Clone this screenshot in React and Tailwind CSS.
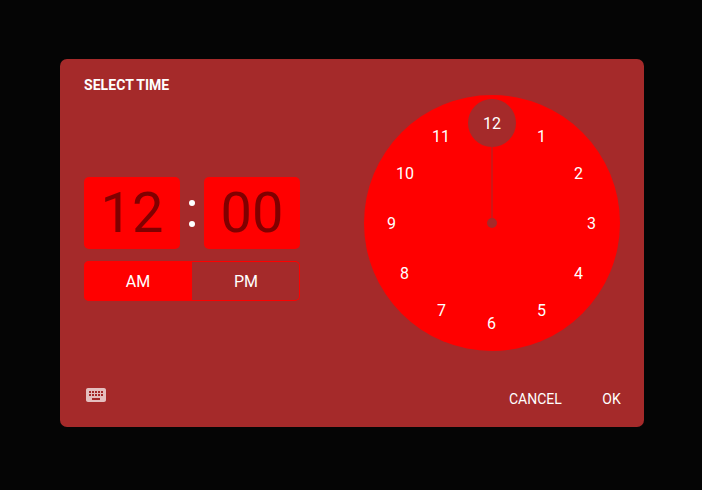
// Left edge and baseline of each hour label on the 256-unit dial.
const hours = [
  { label: "12", x: 119, y: 34 },
  { label: "1", x: 173, y: 47 },
  { label: "2", x: 210, y: 84 },
  { label: "3", x: 223, y: 134 },
  { label: "4", x: 210, y: 184 },
  { label: "5", x: 173, y: 221 },
  { label: "6", x: 123, y: 234 },
  { label: "7", x: 73, y: 221 },
  { label: "8", x: 36, y: 184 },
  { label: "9", x: 23, y: 134 },
  { label: "10", x: 32, y: 84 },
  { label: "11", x: 68, y: 47 },
];

function KeyboardIcon() {
  return (
    <svg viewBox="0 0 24 24" className="h-6 w-6 fill-white/70">
      <path d="M20 5H4c-1.1 0-1.99.9-1.99 2L2 17c0 1.1.9 2 2 2h16c1.1 0 2-.9 2-2V7c0-1.1-.9-2-2-2zm-9 3h2v2h-2V8zm0 3h2v2h-2v-2zM8 8h2v2H8V8zm0 3h2v2H8v-2zm-1 2H5v-2h2v2zm0-3H5V8h2v2zm9 7H8v-2h8v2zm0-4h-2v-2h2v2zm0-3h-2V8h2v2zm3 3h-2v-2h2v2zm0-3h-2V8h2v2z" />
    </svg>
  );
}

function TimeBox({ children }) {
  return (
    <div className="flex h-18 w-24 items-center justify-center rounded-[5px] bg-[#ff0000] text-[56px] leading-none text-[#800000]">
      {children}
    </div>
  );
}

function ClockDial() {
  return (
    <svg viewBox="0 0 256 256" className="h-64 w-64">
      <circle cx="128" cy="128" r="128" fill="#ff0000" />
      <path d="M128 52V128" stroke="#a52a2a" strokeWidth="1" />
      <circle cx="128" cy="128" r="5" fill="#a52a2a" />
      <circle cx="128" cy="28" r="24" fill="#a52a2a" />
      {hours.map(({ label, x, y }) => (
        <text key={label} x={x} y={y} className="fill-white text-base">
          {label}
        </text>
      ))}
    </svg>
  );
}

export default function App() {
  return (
    <div className="h-[490px] w-[702px] bg-[#050505] pt-[59px] pl-[60px] font-['Roboto',sans-serif] text-white">
      <div className="flex h-[368px] w-[584px] justify-between rounded-[7px] bg-[#a52a2a] px-6">
        <div className="flex w-[216px] flex-col">
          <h1 className="mt-4 h-5 text-sm leading-5 font-bold tracking-[0.05px] [word-spacing:-0.5px]">SELECT TIME</h1>
          <div className="mt-[82px] flex">
            <TimeBox>12</TimeBox>
            <div className="flex w-6 flex-col items-center gap-[15.5px] pt-[22.7px]">
              <span className="h-1.5 w-1.5 rounded-full bg-white" />
              <span className="h-1.5 w-1.5 rounded-full bg-white" />
            </div>
            <TimeBox>00</TimeBox>
          </div>
          <div className="mt-3 flex h-10 overflow-hidden rounded-[5px] text-base ring-1 ring-[#ff0000] ring-inset">
            <button className="w-[108px] bg-[#ff0000] pt-px">AM</button>
            <button className="w-[108px] pt-px">PM</button>
          </div>
          <button className="mt-[82px] h-6 w-6">
            <KeyboardIcon />
          </button>
        </div>
        <div className="flex w-64 flex-col pt-9">
          <ClockDial />
          <div className="mt-[38px] flex justify-end gap-[40.5px] text-sm leading-5">
            <button>CANCEL</button>
            <button className="-mr-[0.7px]">OK</button>
          </div>
        </div>
      </div>
    </div>
  );
}
